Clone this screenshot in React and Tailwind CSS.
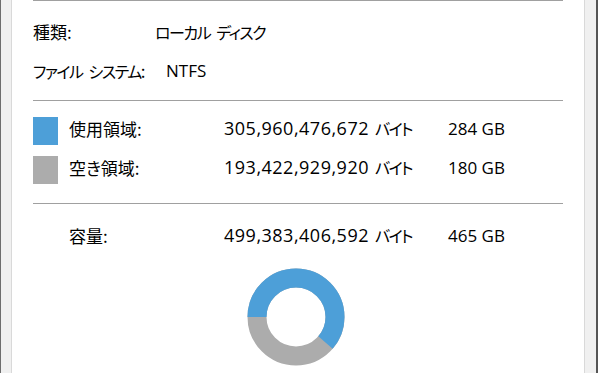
const jp = { fontFamily: '"Noto Sans CJK JP", "Noto Sans", sans-serif' };
const latin = { fontFamily: '"Open Sans", "Noto Sans", sans-serif' };

const USED = 305960476672;
const TOTAL = 499383406592;

function Donut() {
  const r = 39;
  const c = 2 * Math.PI * r;
  const used = (USED / TOTAL) * c;
  return (
    <svg width="98" height="98" viewBox="0 0 98 98">
      <circle cx="49" cy="49" r={r} fill="none" stroke="#acacac" strokeWidth="19" />
      <circle
        cx="49"
        cy="49"
        r={r}
        fill="none"
        stroke="#4d9fd8"
        strokeWidth="19"
        strokeDasharray={`${used} ${c}`}
        transform="rotate(180 49 49)"
      />
    </svg>
  );
}

// Yu Gothic UI draws kana narrow and latin fairly large, so split them up
function Kana({ children }) {
  return <span className="text-[16px] tracking-[-1.5px]">{children}</span>;
}

function Gap() {
  return <span className="inline-block w-[6px]" />;
}

function Num({ children, wide }) {
  return (
    <span className={wide ? 'text-[18px] tracking-[0.5px]' : 'text-[17px]'} style={latin}>
      {children}
    </span>
  );
}

function Bytes({ value }) {
  return (
    <span className="w-[224px] mb-[4px]">
      <Num wide>{value}</Num>
      <Gap />
      <Kana>バイト</Kana>
    </span>
  );
}

function SpaceRow({ color, label, bytes, size }) {
  return (
    <div className="flex items-center h-[39px]">
      <div className={`w-[25px] h-[28px] ${color}`} />
      <span className="ml-[11px] w-[155px] mb-[4px]">{label}</span>
      <Bytes value={bytes} />
      <span className="mb-[4px]">
        <Num>{size}</Num>
      </span>
    </div>
  );
}

export default function App() {
  return (
    <div
      className="w-[598px] h-[373px] flex bg-[#f0f0f0] overflow-hidden text-[17px] text-black [font-feature-settings:'palt']"
      style={jp}
    >
      <div className="w-px bg-[#6d6d6d]" />
      <div className="w-[10px]" />

      {/* General tab panel */}
      <div className="w-[574px] bg-white border-x border-[#d9d9d9] px-[21px]">
        <div className="border-t border-[#a0a0a0]" />

        <div className="pt-[13px]">
          <div className="flex items-center h-[39px]">
            <span className="w-[122px] mb-[4px]">種類:</span>
            <span className="mb-[4px]">
              <Kana>ローカル</Kana>
              <Gap />
              <Kana>ディスク</Kana>
            </span>
          </div>
          <div className="flex items-center h-[39px]">
            <span className="w-[133px] mb-[4px]">
              <Kana>ファイル</Kana>
              <Gap />
              <Kana>システム</Kana>:
            </span>
            <span className="mb-[4px]">
              <Num>NTFS</Num>
            </span>
          </div>
        </div>

        <div className="mt-[8px] border-t border-[#a0a0a0]" />

        <div className="pt-[10px]">
          <SpaceRow
            color="bg-[#4d9fd8]"
            label="使用領域:"
            bytes="305,960,476,672"
            size="284 GB"
          />
          <SpaceRow
            color="bg-[#acacac]"
            label="空き領域:"
            bytes="193,422,929,920"
            size="180 GB"
          />
        </div>

        <div className="mt-[14px] border-t border-[#a0a0a0]" />

        <div className="mt-[14px] flex items-center h-[39px] pl-[36px]">
          <span className="w-[155px] mb-[4px]">容量:</span>
          <Bytes value="499,383,406,592" />
          <span className="mb-[4px]">
            <Num>465 GB</Num>
          </span>
        </div>

        <div className="mt-[11px] ml-[214px]">
          <Donut />
        </div>
      </div>

      <div className="w-[11px]" />
      <div className="w-[2px] bg-[#555555]" />
    </div>
  );
}
